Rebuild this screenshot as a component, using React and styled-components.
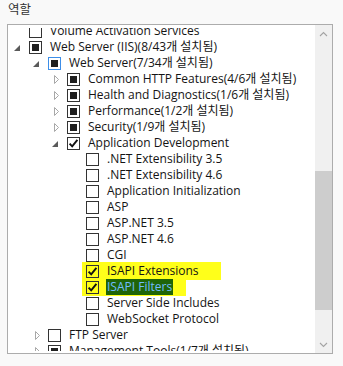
import React from "react";
import styled, { createGlobalStyle } from "styled-components";

const Global = createGlobalStyle`
  html, body { margin: 0; padding: 0; background: #f9f9f9; }
  body { font-family: "Open Sans", "Noto Sans CJK KR", sans-serif; }
`;

const Page = styled.div`
  width: 343px;
  height: 366px;
  overflow: hidden;
  background: #f9f9f9;
`;

const Title = styled.div`
  margin: 0 0 6px 8px;
  font-size: 12.5px;
  line-height: 18px;
  color: #333333;
  font-family: "Noto Sans CJK KR", sans-serif;
`;

const Panel = styled.div`
  margin-left: 7px;
  width: 324px;
  height: 328px;
  border: 1px solid #acacac;
  background: #fff;
  display: flex;
`;

const TreeViewport = styled.div`
  flex: 1;
  margin: 3px 0 2px 0;
  overflow: hidden;
`;

const TreeList = styled.ul`
  list-style: none;
  margin: -5px 0 0 0;
  padding: 0;
`;

const Row = styled.li`
  height: 16px;
  display: flex;
  align-items: center;
  padding-left: ${(p) => (p.$level - 1) * 19}px;
  font-size: 12px;
  color: #141414;
  white-space: nowrap;
`;

const ExpanderSlot = styled.span`
  width: 21px;
  height: 16px;
  flex: none;
  display: flex;
`;

const Item = styled.span`
  display: inline-flex;
  align-items: center;
  height: 16px;
  ${(p) =>
    p.$marker
      ? `background: #ffff1a; padding: 1px ${p.$extra}px 1px 4px; margin-left: -4px; position: relative; z-index: ${p.$z};`
      : ""}
`;

const Box = styled.span`
  width: 11px;
  height: 11px;
  flex: none;
  border: 1px solid ${(p) => (p.$focus ? "#3d8ee8" : "#333333")};
  background: ${(p) => (p.$marker ? "transparent" : "#fff")};
  display: flex;
  align-items: center;
  justify-content: center;
`;

const Square = styled.span`
  width: 7px;
  height: 7px;
  background: #1f1f1f;
`;

const Label = styled.span`
  margin-left: 8px;
  line-height: 16px;
  ${(p) =>
    p.$selected
      ? `background: #1f6408; color: #72bcff; padding: 0 1px; margin-left: 7px;`
      : ""}
`;

const ScrollBar = styled.div`
  width: 17px;
  flex: none;
  background: #f0f0f0;
  display: flex;
  flex-direction: column;
`;

const ScrollButton = styled.div`
  height: 17px;
  display: flex;
  align-items: center;
  justify-content: center;
`;

const Track = styled.div`
  flex: 1;
`;

const Thumb = styled.div`
  width: 17px;
  background: #cdcdcd;
`;

const Expander = ({ state }) => {
  if (state === "expanded")
    return (
      <svg width="21" height="16" viewBox="0 0 21 16">
        <path d="M12 6 L12 12 L6 12 Z" fill="#5a5a5a" />
      </svg>
    );
  if (state === "collapsed")
    return (
      <svg width="21" height="16" viewBox="0 0 21 16">
        <path d="M8.5 4.5 L12.5 8.5 L8.5 12.5 Z" fill="none" stroke="#a8a8a8" strokeWidth="1" />
      </svg>
    );
  return null;
};

const Check = () => (
  <svg width="11" height="11" viewBox="0 0 11 11">
    <path d="M1.6 5.6 L4.2 8.4 L9.4 1.8" fill="none" stroke="#111" strokeWidth="1.9" />
  </svg>
);

const rows = [
  { l: 1, e: null, c: "off", t: "Volume Activation Services" },
  { l: 1, e: "expanded", c: "mixed", t: "Web Server (IIS)(8/43개 설치됨)" },
  { l: 2, e: "expanded", c: "mixed", t: "Web Server(7/34개 설치됨)", focus: true },
  { l: 3, e: "collapsed", c: "mixed", t: "Common HTTP Features(4/6개 설치됨)" },
  { l: 3, e: "collapsed", c: "mixed", t: "Health and Diagnostics(1/6개 설치됨)" },
  { l: 3, e: "collapsed", c: "mixed", t: "Performance(1/2개 설치됨)" },
  { l: 3, e: "collapsed", c: "mixed", t: "Security(1/9개 설치됨)" },
  { l: 3, e: "expanded", c: "on", t: "Application Development" },
  { l: 4, e: null, c: "off", t: ".NET Extensibility 3.5" },
  { l: 4, e: null, c: "off", t: ".NET Extensibility 4.6" },
  { l: 4, e: null, c: "off", t: "Application Initialization" },
  { l: 4, e: null, c: "off", t: "ASP" },
  { l: 4, e: null, c: "off", t: "ASP.NET 3.5" },
  { l: 4, e: null, c: "off", t: "ASP.NET 4.6" },
  { l: 4, e: null, c: "off", t: "CGI" },
  { l: 4, e: null, c: "on", t: "ISAPI Extensions", marker: 22, z: 1 },
  { l: 4, e: null, c: "on", t: "ISAPI Filters", marker: 13, z: 2, selected: true },
  { l: 4, e: null, c: "off", t: "Server Side Includes" },
  { l: 4, e: null, c: "off", t: "WebSocket Protocol" },
  { l: 2, e: "collapsed", c: "off", t: "FTP Server" },
  { l: 2, e: "collapsed", c: "mixed", t: "Management Tools(1/7개 설치됨)" },
];

export default function App() {
  return (
    <Page>
      <Global />
      <Title>역할</Title>
      <Panel>
        <TreeViewport>
          <TreeList>
            {rows.map((r, i) => (
              <Row key={i} $level={r.l}>
                <ExpanderSlot>
                  <Expander state={r.e} />
                </ExpanderSlot>
                <Item $marker={!!r.marker} $extra={r.marker} $z={r.z}>
                  <Box $focus={r.focus} $marker={!!r.marker}>
                    {r.c === "mixed" && <Square />}
                    {r.c === "on" && <Check />}
                  </Box>
                  <Label $selected={r.selected}>{r.t}</Label>
                </Item>
              </Row>
            ))}
          </TreeList>
        </TreeViewport>
        <ScrollBar>
          <ScrollButton>
            <svg width="9" height="6" viewBox="0 0 9 6">
              <path d="M1 5 L4.5 1.5 L8 5" fill="none" stroke="#a3a3a3" strokeWidth="1.1" />
            </svg>
          </ScrollButton>
          <Track>
            <Thumb style={{ marginTop: 129, height: 139 }} />
          </Track>
          <ScrollButton>
            <svg width="9" height="6" viewBox="0 0 9 6">
              <path d="M1 1 L4.5 4.5 L8 1" fill="none" stroke="#a3a3a3" strokeWidth="1.1" />
            </svg>
          </ScrollButton>
        </ScrollBar>
      </Panel>
    </Page>
  );
}
